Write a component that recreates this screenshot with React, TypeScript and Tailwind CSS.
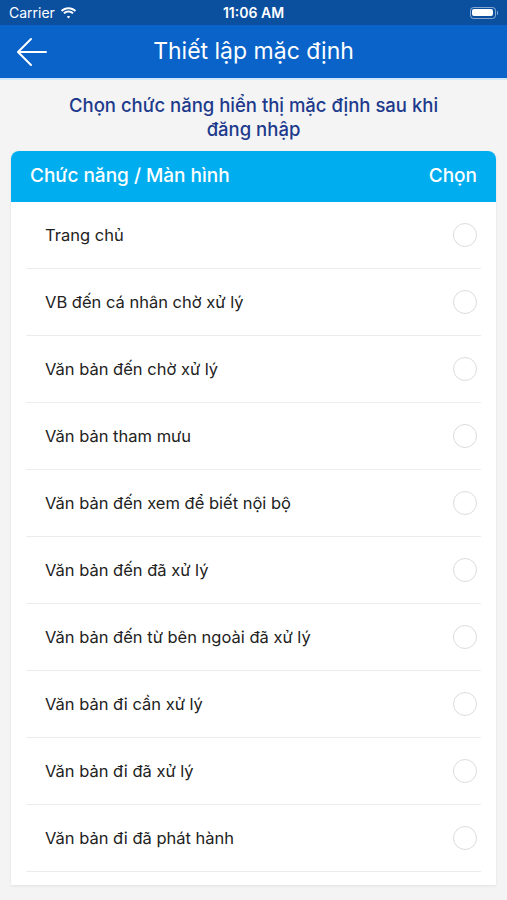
import React from 'react';

const items = [
  'Trang chủ',
  'VB đến cá nhân chờ xử lý',
  'Văn bản đến chờ xử lý',
  'Văn bản tham mưu',
  'Văn bản đến xem để biết nội bộ',
  'Văn bản đến đã xử lý',
  'Văn bản đến từ bên ngoài đã xử lý',
  'Văn bản đi cần xử lý',
  'Văn bản đi đã xử lý',
  'Văn bản đi đã phát hành',
];

function StatusBar() {
  return (
    <div className="h-[25px] bg-[#0b4f9f] text-white flex items-center px-[9px] relative">
      <div className="flex items-center gap-[5px] text-[14px]">
        <span>Carrier</span>
        <svg width="17" height="12" viewBox="0 0 17 12" fill="white">
          <path d="M8.5 2.2c2.4 0 4.6.9 6.3 2.5l1.3-1.4C14 1.3 11.4.2 8.5.2S3 1.3.9 3.3l1.3 1.4C3.9 3.1 6.1 2.2 8.5 2.2z" />
          <path d="M8.5 5.6c1.5 0 2.9.6 3.9 1.5l1.3-1.4C12.3 4.4 10.5 3.6 8.5 3.6S4.7 4.4 3.3 5.7l1.3 1.4c1-.9 2.4-1.5 3.9-1.5z" />
          <path d="M8.5 8.9c.7 0 1.3.3 1.8.7L8.5 11.5 6.7 9.6c.5-.4 1.1-.7 1.8-.7z" />
        </svg>
      </div>
      <div className="absolute inset-x-0 top-0 h-[25px] flex items-center justify-center text-[14px] font-semibold pointer-events-none">
        11:06 AM
      </div>
      <div className="ml-auto flex items-center gap-[1px]">
        <div className="w-[26px] h-[12px] rounded-[3.5px] border border-white/50 p-[1.5px]">
          <div className="w-full h-full bg-white rounded-[2px]" />
        </div>
        <div className="w-[1.5px] h-[4px] bg-white/50 rounded-r" />
      </div>
    </div>
  );
}

function NavBar() {
  return (
    <div className="h-[55px] bg-[#0a63c8] border-b-2 border-[#cfe6fb] flex items-center relative">
      <button className="absolute left-[16px] top-[12px]">
        <svg width="32" height="30" viewBox="0 0 32 30" fill="none" stroke="white" strokeWidth="2" strokeLinecap="round" strokeLinejoin="round">
          <path d="M30 15H3" />
          <path d="M15 2L2 15l13 13" />
        </svg>
      </button>
      <h1 className="w-full text-center text-white text-[23px]">Thiết lập mặc định</h1>
    </div>
  );
}

function Radio() {
  return <div className="w-[24px] h-[24px] rounded-full border border-[#dcdcdc] bg-white" />;
}

export default function App() {
  return (
    <div
      className="w-[507px] h-[900px] bg-[#f4f4f4] overflow-hidden"
      style={{ fontFamily: 'Inter, "Noto Sans", sans-serif' }}
    >
      <StatusBar />
      <NavBar />

      <p className="text-center text-[#1d3a8c] text-[18.5px] font-medium leading-[24px] px-[60px] pt-[13px] pb-[10px]">
        Chọn chức năng hiển thị mặc định sau khi đăng nhập
      </p>

      <div className="mx-[11px] bg-white rounded-t-[8px] shadow-[0_1px_3px_rgba(0,0,0,0.08)] pb-[13px]">
        <div className="h-[51px] bg-[#00aeef] rounded-t-[8px] flex items-center justify-between px-[19px] text-white text-[19px] font-medium">
          <span>Chức năng / Màn hình</span>
          <span>Chọn</span>
        </div>
        <ul className="px-[15px]">
          {items.map((item) => (
            <li key={item} className="h-[67px] border-b border-[#ececec] flex items-center justify-between pl-[19px] pr-[4px]">
              <span className="text-[#222] text-[16.5px]">{item}</span>
              <Radio />
            </li>
          ))}
        </ul>
      </div>
    </div>
  );
}
